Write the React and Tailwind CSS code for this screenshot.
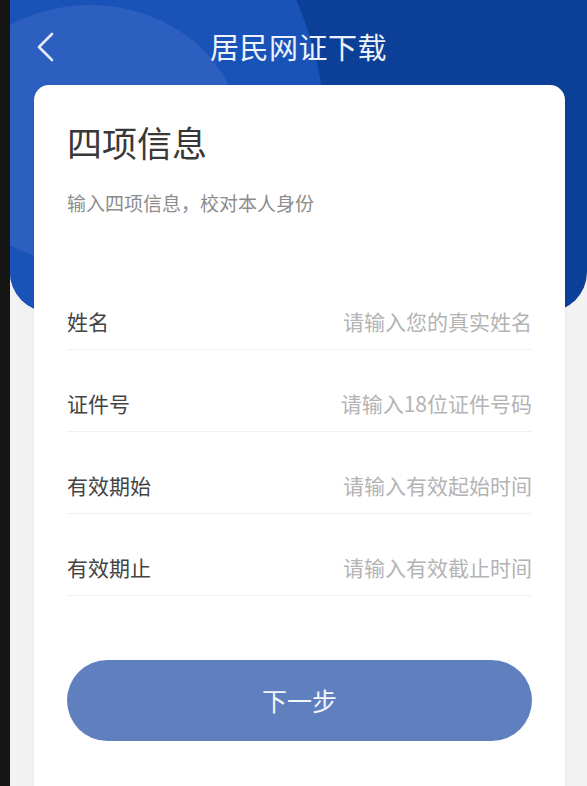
import React from 'react'

const FONT = { fontFamily: '"Noto Sans CJK SC", "Noto Sans", sans-serif' }

const rows = [
  { label: '姓名', hint: '请输入您的真实姓名' },
  { label: '证件号', hint: '请输入18位证件号码' },
  { label: '有效期始', hint: '请输入有效起始时间' },
  { label: '有效期止', hint: '请输入有效截止时间' },
]

function BackIcon() {
  return (
    <svg width="20" height="32" viewBox="0 0 20 32" fill="none" aria-hidden="true">
      <polyline
        points="17,3 4,16 17,29"
        stroke="#e3eaf7"
        strokeWidth="2.6"
        strokeLinecap="round"
        strokeLinejoin="round"
      />
    </svg>
  )
}

export default function App() {
  return (
    <div className="flex h-[786px] overflow-hidden bg-[#151515]" style={FONT}>
      <div className="w-[10px] shrink-0 bg-[#151515]" />

      <div className="relative flex-1 overflow-hidden bg-[#f2f2f2]">
        {/* header background */}
        <div className="absolute inset-x-0 top-0 h-[312px] overflow-hidden rounded-b-[40px] bg-[#0c3f98]">
          <div className="absolute left-[-392px] top-[-212px] h-[708px] w-[708px] rounded-full bg-[#1a53b7]" />
          <div className="absolute left-[-70px] top-[5px] h-[260px] w-[300px] rounded-[50%] bg-[#2c5fc0]" />
        </div>

        {/* nav bar */}
        <div className="relative flex h-[85px] items-start justify-center pt-[27px]">
          <button className="absolute left-[25px] top-[31px]">
            <BackIcon />
          </button>
          <h1 className="text-[29px] leading-[38px] tracking-[0.5px] text-[#eef2fa]">居民网证下载</h1>
        </div>

        {/* card */}
        <div className="relative ml-[24px] mr-[22px] h-[760px] rounded-[15px] bg-white px-[33px] pt-[36px] shadow-[0_1px_4px_rgba(0,0,0,0.06)]">
          <h2 className="text-[35px] leading-[42px] text-[#383838]">四项信息</h2>
          <p className="mt-[27px] text-[19px] leading-[26px] text-[#8c8c8c]">输入四项信息，校对本人身份</p>

          <div className="mt-[52px] flex flex-col">
            {rows.map((r) => (
              <div
                key={r.label}
                className="mt-[25px] flex h-[57px] items-end justify-between border-b border-[#f1f1f1] pb-[13px]"
              >
                <span className="text-[21px] leading-[30px] text-[#444444]">{r.label}</span>
                <span className="text-[21px] leading-[30px] text-[#b4b4b4]">{r.hint}</span>
              </div>
            ))}
          </div>

          <button className="mt-[64px] flex h-[81px] w-full items-center justify-center rounded-full bg-[#5f7fbf] text-[25px] text-[#f4f6fb]">
            下一步
          </button>
        </div>
      </div>
    </div>
  )
}
